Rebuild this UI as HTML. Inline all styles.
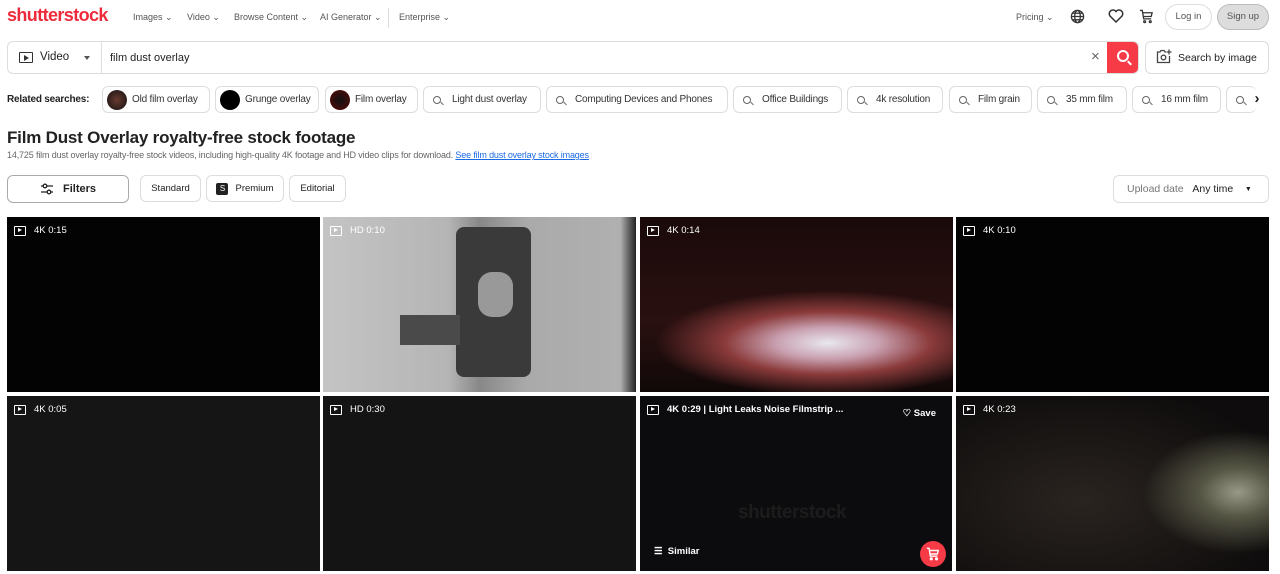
<!DOCTYPE html>
<html><head><style>
*{box-sizing:border-box;margin:0;padding:0}
body{width:1280px;height:574px;overflow:hidden;background:#fff;font-family:"Liberation Sans",sans-serif;color:#212121;position:relative}
.a{position:absolute}
.nav{font-size:9px;color:#555;top:12px}
.chip{position:absolute;top:86px;height:27px;border:1px solid #ddd;border-radius:6px;font-size:10px;color:#333;display:flex;align-items:center;padding:0 9px;white-space:nowrap;overflow:hidden;letter-spacing:-0.2px}
.chip .q{flex-shrink:0;width:8px;height:8px;border:1.2px solid #666;border-radius:50%;margin-right:11px;position:relative}
.chip .q:after{content:"";position:absolute;width:4px;height:1.2px;background:#666;right:-4px;bottom:-2px;transform:rotate(45deg)}
.chip .t{flex-shrink:0;width:20px;height:20px;border-radius:50%;margin:0 5px 0 -5px}
.tile{position:absolute;width:313px;height:175px;background:#0b0b0b;overflow:hidden}
.lab{position:absolute;left:7px;top:8px;color:#fff;font-size:9.5px;display:flex;align-items:center}
.lab i{flex-shrink:0;width:12px;height:10px;border:1.3px solid #fff;border-radius:1px;margin-right:8px;position:relative}
.lab i:after{content:"";position:absolute;left:3px;top:1.5px;border-left:4px solid #fff;border-top:2.5px solid transparent;border-bottom:2.5px solid transparent}
.btn{position:absolute;border:1px solid #ddd;border-radius:6px;font-size:9.5px;display:flex;align-items:center;justify-content:center}
</style></head><body>
<div class="a" style="left:7px;top:5px;font-size:18px;font-weight:bold;color:#ee2b3b;letter-spacing:-0.6px">shutterstock</div>
<div class="a nav" style="left:133px">Images ⌄</div>
<div class="a nav" style="left:187px">Video ⌄</div>
<div class="a nav" style="left:234px">Browse Content ⌄</div>
<div class="a nav" style="left:320px">AI Generator ⌄</div>
<div class="a" style="left:388px;top:8px;width:1px;height:20px;background:#ddd"></div>
<div class="a nav" style="left:399px">Enterprise ⌄</div>
<div class="a nav" style="left:1016px">Pricing ⌄</div>
<svg class="a" style="left:1070px;top:9px" width="15" height="15" viewBox="0 0 16 16" fill="none" stroke="#333" stroke-width="1.4"><circle cx="8" cy="8" r="6.5"/><ellipse cx="8" cy="8" rx="3" ry="6.5"/><path d="M1.5 8h13M2.5 4.5h11M2.5 11.5h11"/></svg>
<svg class="a" style="left:1108px;top:9px" width="16" height="14" viewBox="0 0 16 14" fill="none" stroke="#333" stroke-width="1.5"><path d="M8 13L2 7A3.3 3.3 0 0 1 8 2.5 3.3 3.3 0 0 1 14 7z"/></svg>
<svg class="a" style="left:1139px;top:9px" width="15" height="15" viewBox="0 0 16 16" fill="none" stroke="#333" stroke-width="1.4"><path d="M1 1.5h2.5l1.5 9h8M4 4h10l-1 4H4.5"/><circle cx="6" cy="13.5" r="1"/><circle cx="12" cy="13.5" r="1"/></svg>
<div class="a" style="left:1165px;top:4px;width:47px;height:26px;border:1px solid #ddd;border-radius:13px;font-size:9.5px;color:#555;text-align:center;line-height:24px">Log in</div>
<div class="a" style="left:1217px;top:4px;width:52px;height:26px;border:1px solid #bbb;background:#ddd;border-radius:13px;font-size:9.5px;color:#555;text-align:center;line-height:24px">Sign up</div>

<div class="a" style="left:7px;top:41px;width:1132px;height:33px;border:1px solid #ddd;border-radius:6px;overflow:hidden">
 <div class="a" style="left:11px;top:10px;width:14px;height:11px;border:1.5px solid #333;border-radius:1px"></div>
 <div class="a" style="left:16px;top:13px;border-left:5px solid #333;border-top:3px solid transparent;border-bottom:3px solid transparent"></div>
 <div class="a" style="left:32px;top:9px;font-size:11.5px">Video</div>
 <div class="a" style="left:76px;top:14px;border-top:4px solid #555;border-left:3.5px solid transparent;border-right:3.5px solid transparent"></div>
 <div class="a" style="left:93px;top:0;width:1px;height:33px;background:#ddd"></div>
 <div class="a" style="left:102px;top:10px;font-size:11px">film dust overlay</div>
 <div class="a" style="left:1083px;top:6px;font-size:15px;color:#666">×</div>
 <div class="a" style="left:1099px;top:0;width:33px;height:33px;background:#f63a46"></div>
 <div class="a" style="left:1109px;top:8px;width:12px;height:12px;border:2px solid #fff;border-radius:50%"></div>
 <div class="a" style="left:1119px;top:20px;width:5px;height:2px;background:#fff;transform:rotate(45deg)"></div>
</div>
<div class="a" style="left:1145px;top:41px;width:124px;height:33px;border:1px solid #ddd;border-radius:6px;font-size:10.5px;padding:10px 0 0 32px;white-space:nowrap">Search by image</div>
<svg class="a" style="left:1156px;top:49px" width="16" height="15" viewBox="0 0 16 15" fill="none" stroke="#444" stroke-width="1.3"><path d="M10 3H9L8 1.5H5L4 3H1.5v10.5h12V7"/><circle cx="7.5" cy="8.5" r="2.3"/><path d="M13 0.5v5M10.5 3h5"/></svg>

<div class="a" style="left:7px;top:94px;font-size:10px;font-weight:bold;letter-spacing:-0.2px">Related searches:</div>
<div class="chip" style="left:102px;width:108px"><span class="t" style="background:radial-gradient(#6a3a30,#111)"></span>Old film overlay</div>
<div class="chip" style="left:215px;width:104px"><span class="t" style="background:#000"></span>Grunge overlay</div>
<div class="chip" style="left:325px;width:93px"><span class="t" style="background:radial-gradient(#111,#5a0a0a)"></span>Film overlay</div>
<div class="chip" style="left:423px;width:118px"><span class="q"></span>Light dust overlay</div>
<div class="chip" style="left:546px;width:182px"><span class="q"></span>Computing Devices and Phones</div>
<div class="chip" style="left:733px;width:109px"><span class="q"></span>Office Buildings</div>
<div class="chip" style="left:847px;width:96px"><span class="q"></span>4k resolution</div>
<div class="chip" style="left:949px;width:83px"><span class="q"></span>Film grain</div>
<div class="chip" style="left:1037px;width:90px"><span class="q"></span>35 mm film</div>
<div class="chip" style="left:1132px;width:89px"><span class="q"></span>16 mm film</div>
<div class="chip" style="left:1226px;width:30px;border-right:none"><span class="q"></span></div>
<div class="a" style="left:1250px;top:90px;font-size:15px;font-weight:bold;background:#fff;width:14px;text-align:center">›</div>

<div class="a" style="left:7px;top:128px;font-size:17px;font-weight:bold;letter-spacing:-0.2px">Film Dust Overlay royalty-free stock footage</div>
<div class="a" style="left:7px;top:150px;font-size:9px;color:#666;letter-spacing:-0.15px">14,725 film dust overlay royalty-free stock videos, including high-quality 4K footage and HD video clips for download. <span style="color:#1a6ae6;text-decoration:underline">See film dust overlay stock images</span></div>

<div class="btn" style="left:7px;top:175px;width:122px;height:28px;border-color:#aaa;font-size:11px;font-weight:bold"><svg width="14" height="12" viewBox="0 0 14 12" fill="none" stroke="#222" stroke-width="1.3" style="margin-right:9px"><path d="M1 3h12M1 9h12"/><circle cx="5" cy="3" r="1.8" fill="#fff"/><circle cx="9" cy="9" r="1.8" fill="#fff"/></svg>Filters</div>
<div class="btn" style="left:140px;top:175px;width:61px;height:27px">Standard</div>
<div class="btn" style="left:206px;top:175px;width:78px;height:27px"><span style="background:#222;color:#fff;font-size:8px;width:12px;height:12px;border-radius:2px;text-align:center;line-height:12px;margin-right:7px">S</span>Premium</div>
<div class="btn" style="left:289px;top:175px;width:57px;height:27px">Editorial</div>
<div class="btn" style="left:1113px;top:175px;width:156px;height:28px;justify-content:flex-start;padding-left:13px;font-size:10.5px"><span style="color:#777">Upload date</span>&nbsp;&nbsp;&nbsp;Any time&nbsp;&nbsp;&nbsp;&nbsp;<span style="font-size:7px">▼</span></div>

<div class="tile" style="left:7px;top:217px;background:#030303"><div class="lab"><i></i>4K 0:15</div></div>
<div class="tile" style="left:323px;top:217px;background:linear-gradient(90deg,#c4c4c4 0%,#b5b5b5 40%,#888 50%,#aaa 65%,#b0b0b0 95%,#222 100%)"><div class="a" style="left:133px;top:10px;width:75px;height:150px;background:#3a3a3a;border-radius:8px"></div><div class="a" style="left:155px;top:55px;width:35px;height:45px;background:#999;border-radius:14px"></div><div class="a" style="left:77px;top:98px;width:60px;height:30px;background:#4a4a4a"></div><div class="lab"><i></i>HD 0:10</div></div>
<div class="tile" style="left:640px;top:217px;background:radial-gradient(ellipse 55% 30% at 60% 72%,#e8e8f0 0%,#c9a0b0 30%,#8a3a3a 60%,transparent 100%),linear-gradient(#1a0a0a,#2a1010 60%,#100808)"><div class="lab"><i></i>4K 0:14</div></div>
<div class="tile" style="left:956px;top:217px;background:#030303"><div class="lab"><i></i>4K 0:10</div></div>
<div class="tile" style="left:7px;top:396px;background:#151515"><div class="lab"><i></i>4K 0:05</div></div>
<div class="tile" style="left:323px;top:396px;background:#141414"><div class="lab"><i></i>HD 0:30</div></div>
<div class="tile" style="left:640px;top:396px;width:312px;background:#0c0c0e"><div class="lab" style="font-weight:bold"><i></i>4K 0:29 | Light Leaks Noise Filmstrip ...</div>
 <div class="a" style="right:16px;top:12px;color:#fff;font-size:9.5px;font-weight:bold">♡ Save</div>
 <div class="a" style="left:98px;top:106px;color:#1c1c1c;font-size:19px;font-weight:bold;letter-spacing:-0.5px">shutterstock</div>
 <div class="a" style="left:14px;top:150px;color:#fff;font-size:9.5px;font-weight:bold">☰&nbsp; Similar</div>
 <div class="a" style="left:280px;top:145px;width:26px;height:26px;border-radius:50%;background:#f63a46"><svg style="position:absolute;left:6px;top:6px" width="14" height="14" viewBox="0 0 16 16" fill="none" stroke="#fff" stroke-width="1.6"><path d="M1 1.5h2.5l1.5 9h8M4 4h10l-1 4H4.5"/><circle cx="6" cy="13.5" r="1"/><circle cx="12" cy="13.5" r="1"/></svg></div>
</div>
<div class="tile" style="left:956px;top:396px;background:radial-gradient(ellipse 30% 35% at 90% 55%,#998 0%,#554 40%,transparent 100%),radial-gradient(ellipse at 40% 60%,#2a2420,#0e0c0c 80%)"><div class="lab"><i></i>4K 0:23</div></div>
</body></html>
